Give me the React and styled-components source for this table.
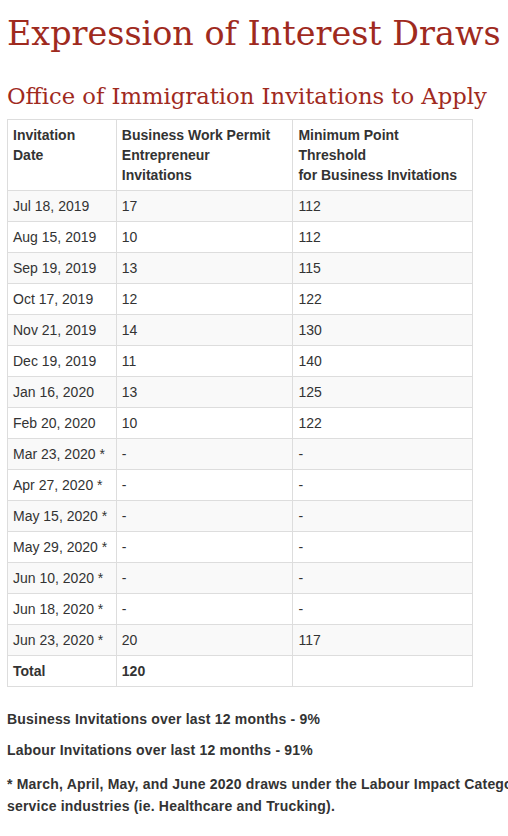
import React from 'react';
import styled, { createGlobalStyle } from 'styled-components';

const GlobalStyle = createGlobalStyle`
  html, body {
    margin: 0;
    padding: 0;
    background: #ffffff;
    overflow-x: hidden;
  }
  body {
    font-family: "Liberation Sans", Arial, sans-serif;
    color: #333333;
  }
`;

const Page = styled.div`
  width: 760px;
  padding: 0 7px 20px;
`;

const Title = styled.h1`
  margin: 0;
  padding-top: 14px;
  font-family: "DejaVu Serif", "Liberation Serif", serif;
  font-weight: 400;
  font-size: 33.4px;
  line-height: 40px;
  color: #9f2a1e;
  white-space: nowrap;
`;

const Subtitle = styled.h2`
  margin: 28px 0 9px;
  font-family: "DejaVu Serif", "Liberation Serif", serif;
  font-weight: 400;
  font-size: 22.7px;
  line-height: 28px;
  color: #9f2a1e;
  white-space: nowrap;
`;

const Table = styled.table`
  border-collapse: collapse;
  border-spacing: 0;
  width: 466px;
  font-size: 14px;
  line-height: 20px;
  color: #333333;
`;

const HeadCell = styled.th`
  width: ${p => p.$w}px;
  padding: 5px;
  border: 1px solid #dddddd;
  text-align: left;
  vertical-align: top;
  font-weight: 700;
`;

const Row = styled.tr`
  background: ${p => (p.$striped ? '#f9f9f9' : '#ffffff')};
`;

const Cell = styled.td`
  padding: 5px;
  border: 1px solid #dddddd;
  vertical-align: top;
  font-weight: ${p => (p.$bold ? 700 : 400)};
`;

const Notes = styled.div`
  margin-top: 21px;
`;

const Note = styled.p`
  margin: ${p => (p.$gap ? '12px' : '0')} 0 9px;
  font-size: 14px;
  line-height: 22px;
  letter-spacing: 0.2px;
  font-weight: 700;
  color: #333333;
`;

const draws = [
  ['Jul 18, 2019', '17', '112'],
  ['Aug 15, 2019', '10', '112'],
  ['Sep 19, 2019', '13', '115'],
  ['Oct 17, 2019', '12', '122'],
  ['Nov 21, 2019', '14', '130'],
  ['Dec 19, 2019', '11', '140'],
  ['Jan 16, 2020', '13', '125'],
  ['Feb 20, 2020', '10', '122'],
  ['Mar 23, 2020 *', '-', '-'],
  ['Apr 27, 2020 *', '-', '-'],
  ['May 15, 2020 *', '-', '-'],
  ['May 29, 2020 *', '-', '-'],
  ['Jun 10, 2020 *', '-', '-'],
  ['Jun 18, 2020 *', '-', '-'],
  ['Jun 23, 2020 *', '20', '117'],
];

export default function App() {
  return (
    <>
      <GlobalStyle />
      <Page>
        <Title>Expression of Interest Draws</Title>
        <Subtitle>Office of Immigration Invitations to Apply</Subtitle>
        <Table>
          <thead>
            <tr>
              <HeadCell $w={98}>Invitation<br />Date</HeadCell>
              <HeadCell $w={166}>Business Work Permit<br />Entrepreneur<br />Invitations</HeadCell>
              <HeadCell $w={169}>Minimum Point<br />Threshold<br />for Business Invitations</HeadCell>
            </tr>
          </thead>
          <tbody>
            {draws.map((d, i) => (
              <Row key={d[0]} $striped={i % 2 === 0}>
                <Cell>{d[0]}</Cell>
                <Cell>{d[1]}</Cell>
                <Cell>{d[2]}</Cell>
              </Row>
            ))}
            <Row>
              <Cell $bold>Total</Cell>
              <Cell $bold>120</Cell>
              <Cell></Cell>
            </Row>
          </tbody>
        </Table>
        <Notes>
          <Note>Business Invitations over last 12 months - 9%</Note>
          <Note>Labour Invitations over last 12 months - 91%</Note>
          <Note $gap>
            * March, April, May, and June 2020 draws under the Labour Impact Category were limited to essential<br />
            service industries (ie. Healthcare and Trucking).
          </Note>
        </Notes>
      </Page>
    </>
  );
}
